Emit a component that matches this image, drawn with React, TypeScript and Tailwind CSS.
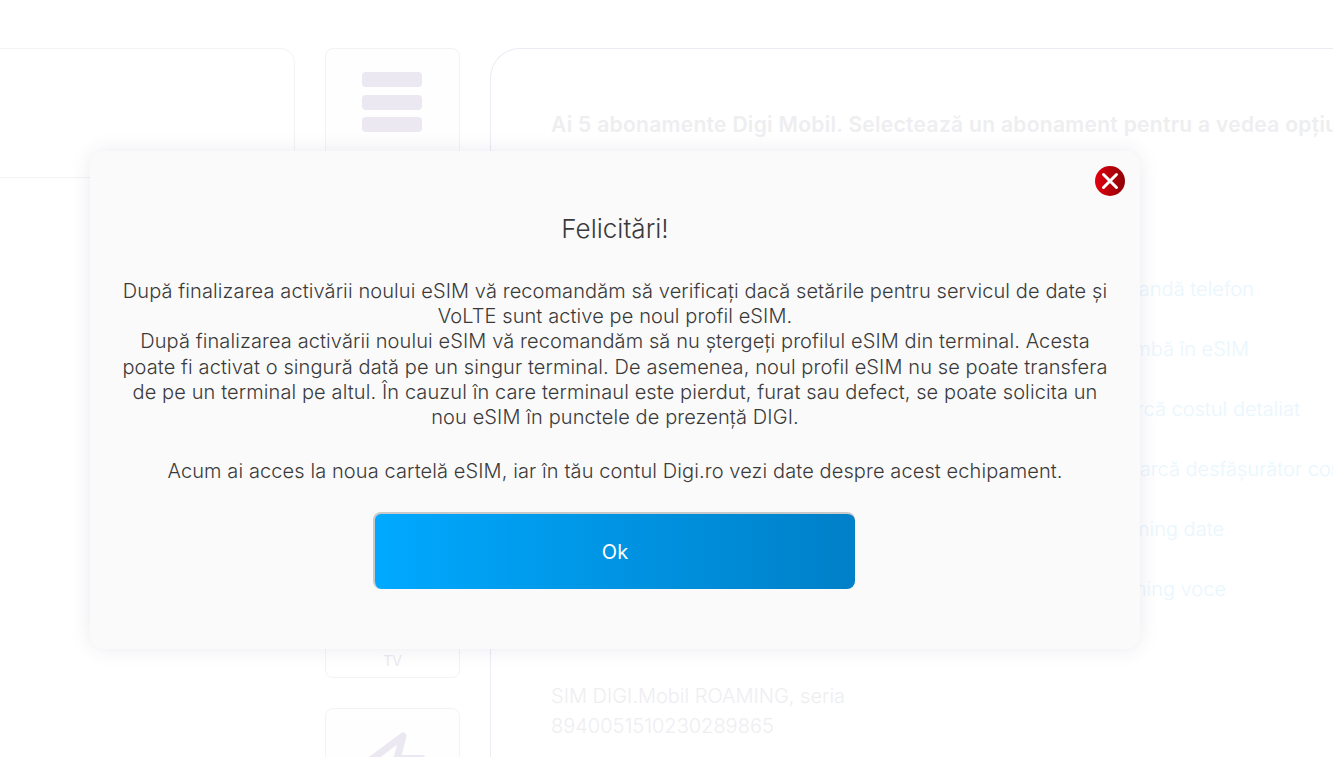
import React from 'react';

const rows = [
  { label: 'Comandă telefon', pad: 'pl-[544px]' },
  { label: 'Schimbă în eSIM', pad: 'pl-[542px]' },
  { label: 'Descarcă costul detaliat', pad: 'pl-[527px]' },
  { label: 'Descarcă desfășurător convorbiri', pad: 'pl-[541px]' },
  { label: 'Activează roaming date', pad: 'pl-[455px]' },
  { label: 'Activează roaming voce', pad: 'pl-[452px]' },
];

export default function App() {
  return (
    <div className="relative h-screen overflow-hidden bg-white font-['Inter','Noto_Sans',sans-serif] font-light">
      {/* Pagina din spate */}
      <div className="flex items-start pt-12 gap-[30px]">
        <div className="w-[295px] h-[130px] shrink-0 rounded-tr-[15px] border-t border-r border-b border-[#f3f2f7]"></div>

        <div className="w-[135px] shrink-0 flex flex-col gap-[30px]">
          <div className="h-[180px] rounded-[8px] border border-[#f3f2f7] pt-[23px] pr-[1px] flex flex-col items-center gap-[7.5px] bg-[#fefefe]">
            <div className="w-[60px] h-[15px] rounded-[4px] bg-[#ebe8f1]"></div>
            <div className="w-[60px] h-[15px] rounded-[4px] bg-[#ebe8f1]"></div>
            <div className="w-[60px] h-[15px] rounded-[4px] bg-[#ebe8f1]"></div>
          </div>
          <div className="h-[420px] rounded-[8px] border border-[#f3f2f7] flex flex-col justify-end items-center pb-[6px] text-sm font-normal text-[#ebe9f0]">
            TV
          </div>
          <div className="h-[120px] rounded-[8px] border border-[#f3f2f7] bg-[#fefefe] flex justify-center pt-[22px] pl-[6px]">
            <svg width="64" height="40" viewBox="0 0 64 40" fill="none" stroke="#ebe8f1" strokeWidth="7" strokeLinecap="round" strokeLinejoin="round">
              <path d="M0 34 L39 5 L33 27.5 L58 27.5" />
            </svg>
          </div>
        </div>

        <div className="flex-1 min-w-0 h-[760px] rounded-tl-[30px] border-t border-l border-[#eceaf3] pl-[60px] pt-[64px] whitespace-nowrap">
          <p className="text-[21px] tracking-[0.3px] font-semibold text-[#eeeef1] leading-[24px]">
            Ai 5 abonamente Digi Mobil. Selectează un abonament pentru a vedea opțiunile
          </p>
          <ul className="mt-[139px] flex flex-col gap-[34px] text-xl text-[#e9f6fe]">
            {rows.map((row) => (
              <li key={row.label} className={`leading-[26px] ${row.pad}`}>{row.label}</li>
            ))}
          </ul>
          <p className="mt-[79px] text-xl leading-[30px] text-[#eeeef1]">
            SIM DIGI.Mobil ROAMING, seria
            <br />
            8940051510230289865
          </p>
        </div>
      </div>

      {/* Fereastra modala */}
      <div className="absolute left-[90px] top-[151px] w-[1050px] h-[498px] rounded-[15px] bg-[#fafafa] shadow-[0_0_20px_rgba(60,60,110,0.1)] text-center text-[#3a3a3a] px-[30px] pt-[60px]">
        <button className="absolute right-[15px] top-[15px] w-[30px] h-[30px] rounded-full bg-gradient-to-r from-[#e2000f] to-[#8f0006] flex items-center justify-center">
          <svg width="18" height="18" viewBox="0 0 18 18" stroke="white" strokeWidth="3" strokeLinecap="round">
            <path d="M2.5 2.5 L15.5 15.5 M15.5 2.5 L2.5 15.5" />
          </svg>
        </button>
        <h2 className="text-[26px] leading-[36px] font-light">Felicitări!</h2>
        <p className="mt-[32px] text-xl tracking-[0.1px] leading-[25.2px]">
          După finalizarea activării noului eSIM vă recomandăm să verificați dacă setările pentru servicul de date și VoLTE sunt active pe noul profil eSIM.
          <br />
          După finalizarea activării noului eSIM vă recomandăm să nu ștergeți profilul eSIM din terminal. Acesta poate fi activat o singură dată pe un singur terminal. De asemenea, noul profil eSIM nu se poate transfera de pe un terminal pe altul. În cauzul în care terminaul este pierdut, furat sau defect, se poate solicita un nou eSIM în punctele de prezență DIGI.
        </p>
        <p className="mt-[29px] text-xl tracking-[0.1px] leading-[25.2px]">
          Acum ai acces la noua cartelă eSIM, iar în tău contul Digi.ro vezi date despre acest echipament.
        </p>
        <div className="mt-[28px] flex justify-center pr-[2px]">
          <button className="w-[482px] h-[77px] rounded-[8px] border-t-2 border-l-2 border-[#c9c9c9] bg-gradient-to-r from-[#00a9ff] to-[#0080c8] text-white text-xl font-normal">
            Ok
          </button>
        </div>
      </div>
    </div>
  );
}
